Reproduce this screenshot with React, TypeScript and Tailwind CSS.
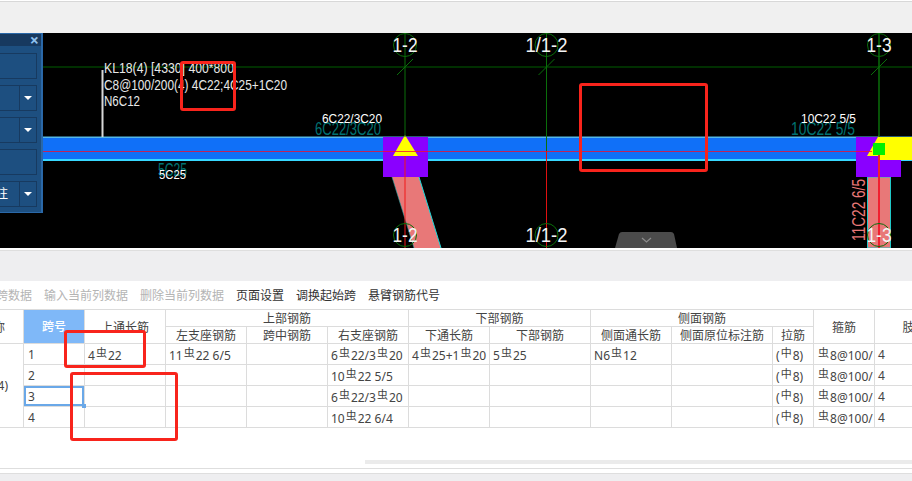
const HOLLOW = '虫'
const ROUND = '中'

// 钢筋符号: the real app uses a private font, a small raised glyph is the closest we get
function R({ c = HOLLOW }: { c?: string }) {
  return <span className="text-[11px] align-[3px] mx-[1px]">{c}</span>
}

function Rebar({ text }: { text: string }) {
  const parts = text.split(/(虫|中)/)
  return (
    <>
      {parts.map((p, i) =>
        p === HOLLOW || p === ROUND ? <R key={i} c={p} /> : <span key={i}>{p}</span>
      )}
    </>
  )
}

const rows = [
  { span: '1', top: '4虫22', left: '11虫22 6/5', right: '6虫22/3虫20', lowThrough: '4虫25+1虫20', low: '5虫25', side: 'N6虫12' },
  { span: '2', top: '', left: '', right: '10虫22 5/5', lowThrough: '', low: '', side: '' },
  { span: '3', top: '', left: '', right: '6虫22/3虫20', lowThrough: '', low: '', side: '' },
  { span: '4', top: '', left: '', right: '10虫22 6/4', lowThrough: '', low: '', side: '' }
]

const widths = [88, 61, 81, 81, 81, 81, 81, 101, 81, 101, 41, 61, 80]

const th = 'border border-[#dcdcdc] p-0 pt-[1px] font-normal text-center text-[#444] overflow-hidden whitespace-nowrap'
const td = 'border border-[#dcdcdc] p-0 pl-[3px] text-left text-[#444] overflow-hidden whitespace-nowrap'

function GridMark({ x, label, labelWidth }: { x: number; label: string; labelWidth: number }) {
  return (
    <g>
      <circle cx={x} cy={45} r={11.5} fill="none" stroke="#0a6e0a" />
      <circle cx={x} cy={235} r={11.5} fill="none" stroke="#0a6e0a" />
      <line x1={x - 8} y1={75} x2={x + 8} y2={59} stroke="#0a6e0a" />
      <text x={x - labelWidth / 2} y={52} fill="#f4f4f4" fontSize={20} textLength={labelWidth} lengthAdjust="spacingAndGlyphs">{label}</text>
      <text x={x - labelWidth / 2} y={242} fill="#f4f4f4" fontSize={20} textLength={labelWidth} lengthAdjust="spacingAndGlyphs">{label}</text>
    </g>
  )
}

function CadView() {
  return (
    <svg viewBox="0 33 912 215" className="block w-[912px] h-[215px] bg-black font-['Liberation_Sans',sans-serif]">
      <line x1={0} y1={67} x2={912} y2={67} stroke="#003f00" strokeWidth={1.5} />

      {/* 梁 */}
      <rect x={0} y={137} width={912} height={23} fill="#1070f8" />
      <rect x={0} y={136.5} width={912} height={1.5} fill="#55b8e8" />
      <rect x={0} y={159} width={912} height={2} fill="#38d8ff" />

      {/* 柱 */}
      <polygon points="392,177 419,177 441,248 414,248" fill="#e87878" />
      <line x1={419} y1={177} x2={441} y2={248} stroke="#20d8d8" />
      <line x1={392} y1={177} x2={414} y2={248} stroke="#20a8a8" strokeWidth={0.6} />
      <rect x={867.5} y={177} width={23} height={71} fill="#e87878" stroke="#20c8c8" />

      <rect x={383} y={137} width={45} height={40} fill="#8a00ff" />
      <rect x={856} y={137} width={45} height={40} fill="#8a00ff" />
      <polygon points="405,135 418,156 393,156" fill="#ffff00" />
      <polygon points="879,135 879,137 912,137 912,160 879,160 879,156 867,156" fill="#ffff00" />

      <line x1={0} y1={151.5} x2={872} y2={151.5} stroke="#f01030" strokeWidth={0.8} />

      <line x1={405} y1={33} x2={405} y2={137} stroke="#0a6e0a" />
      <line x1={405} y1={156} x2={405} y2={248} stroke="#f01818" />
      <line x1={546.5} y1={33} x2={546.5} y2={151} stroke="#0a6e0a" />
      <line x1={546.5} y1={151} x2={546.5} y2={248} stroke="#e01010" />
      <line x1={879} y1={33} x2={879} y2={137} stroke="#0a6e0a" strokeWidth={1.5} />
      <line x1={879} y1={155} x2={879} y2={248} stroke="#f02030" strokeWidth={2} />
      <rect x={873} y={143} width={12} height={12} fill="#00f000" />

      <GridMark x={405} label="1-2" labelWidth={25} />
      <GridMark x={546.5} label="1/1-2" labelWidth={42} />
      <GridMark x={879} label="1-3" labelWidth={25} />

      {/* 集中标注 */}
      <line x1={102.5} y1={70} x2={102.5} y2={137} stroke="#d8d8d8" strokeWidth={2} />
      <text x={104} y={73} fill="#e8e8e8" fontSize={14} textLength={130} lengthAdjust="spacingAndGlyphs">KL18(4) [4330] 400*800</text>
      <text x={104} y={90} fill="#e8e8e8" fontSize={14} textLength={183} lengthAdjust="spacingAndGlyphs">C8@100/200(4) 4C22;4C25+1C20</text>
      <text x={104} y={106} fill="#e8e8e8" fontSize={14} textLength={36} lengthAdjust="spacingAndGlyphs">N6C12</text>

      {/* 原位标注 */}
      <text x={158} y={176} fill="#007272" fontSize={19} textLength={29} lengthAdjust="spacingAndGlyphs">5C25</text>
      <text x={159} y={179} fill="#fff" fontSize={13} textLength={27} lengthAdjust="spacingAndGlyphs">5C25</text>
      <text x={315} y={135} fill="#007272" fontSize={19} textLength={66} lengthAdjust="spacingAndGlyphs">6C22/3C20</text>
      <text x={322} y={123} fill="#fff" fontSize={13} textLength={60} lengthAdjust="spacingAndGlyphs">6C22/3C20</text>
      <text x={791} y={135} fill="#007272" fontSize={19} textLength={64} lengthAdjust="spacingAndGlyphs">10C22 5/5</text>
      <text x={801} y={123} fill="#fff" fontSize={13} textLength={55} lengthAdjust="spacingAndGlyphs">10C22 5/5</text>
      <text transform="translate(865 241) rotate(-90)" fill="#e87878" fontSize={19} textLength={62} lengthAdjust="spacingAndGlyphs">11C22 6/5</text>

      <path d="M615 248 L619 234 Q620 232 622 232 L671 232 Q673 232 674 234 L677 248 Z" fill="#4b4b4b" />
      <path d="M642 238 L646.5 242 L651 238" fill="none" stroke="#8c8c8c" strokeWidth={1.2} />
    </svg>
  )
}

function PanelRow({ label, dropdown }: { label?: string; dropdown?: boolean }) {
  return (
    <div className="flex h-[26px] w-[37px] gap-0">
      <div className="flex-1 min-w-0 overflow-hidden border border-l-0 border-[#173a60] flex items-center justify-end pr-[11px] text-white text-[12px] whitespace-nowrap">
        {label}
      </div>
      {dropdown && (
        <div className="w-[17px] border border-l-0 border-[#173a60] flex items-center justify-center">
          <span className="w-0 h-0 border-x-[4px] border-x-transparent border-t-[4px] border-t-white" />
        </div>
      )}
    </div>
  )
}

function FloatingPanel() {
  return (
    <div className="absolute left-0 top-0 w-[43px] h-[180px] bg-[#1d4f80] border border-l-0 border-[#2a68a8] border-r-2">
      <div className="h-[12px] bg-[#17395f] flex justify-end items-center pr-[2px] text-[#8fc0ee] text-[16px] leading-none font-bold">×</div>
      <div className="flex flex-col gap-[6px] pt-[7px]">
        <PanelRow />
        <PanelRow dropdown />
        <PanelRow dropdown />
        <PanelRow />
        <PanelRow label="标注" dropdown />
      </div>
    </div>
  )
}

function RedBox({ className }: { className: string }) {
  return <div className={`absolute border-[3px] border-[#f8241c] rounded-[3px] ${className}`} />
}

export default function App() {
  return (
    <div className="relative w-[912px] h-[481px] overflow-hidden bg-white font-['Noto_Sans','Noto_Sans_CJK_SC',sans-serif] text-[12px]">
      <div className="h-[33px] mt-[1px] -mb-[1px] bg-[#f0f0f0] border-t border-[#d8d8d8]" />

      <div className="relative h-[215px]">
        <CadView />
        <FloatingPanel />
      </div>

      <div className="h-[3px] bg-white border-b border-[#dedede]" />
      <div className="h-[30px] bg-[#eeeef0]" />

      <div className="h-[28px] pt-[1px] flex items-center gap-3 -ml-[28px] text-[12px] whitespace-nowrap">
        <span className="text-[#b4b4b4]">复制跨数据</span>
        <span className="text-[#b4b4b4]">输入当前列数据</span>
        <span className="text-[#b4b4b4]">删除当前列数据</span>
        <span className="text-[#333]">页面设置</span>
        <span className="text-[#333]">调换起始跨</span>
        <span className="text-[#333]">悬臂钢筋代号</span>
      </div>

      <div className="h-[151px] overflow-hidden">
        <table className="table-fixed border-collapse -ml-[65px] w-[960px] leading-[15px]">
          <colgroup>
            {widths.map((w, i) => (
              <col key={i} style={{ width: w }} />
            ))}
          </colgroup>
          <thead>
            <tr className="h-[17px]">
              <th rowSpan={2} className={`${th} !text-right pr-[18px]`}>构件名称</th>
              <th rowSpan={2} className="border border-[#dcdcdc] p-0 font-medium text-center text-white bg-[#7fb8f8]">跨号</th>
              <th rowSpan={2} className={th}>上通长筋</th>
              <th colSpan={3} className={th}>上部钢筋</th>
              <th colSpan={2} className={th}>下部钢筋</th>
              <th colSpan={3} className={th}>侧面钢筋</th>
              <th rowSpan={2} className={th}>箍筋</th>
              <th rowSpan={2} className={th}>肢数</th>
            </tr>
            <tr className="h-[17px]">
              <th className={th}>左支座钢筋</th>
              <th className={th}>跨中钢筋</th>
              <th className={th}>右支座钢筋</th>
              <th className={th}>下通长筋</th>
              <th className={th}>下部钢筋</th>
              <th className={th}>侧面通长筋</th>
              <th className={th}>侧面原位标注筋</th>
              <th className={th}>拉筋</th>
            </tr>
          </thead>
          <tbody>
            {rows.map((r, i) => (
              <tr key={r.span} className="h-[21px]">
                {i === 0 && (
                  <td rowSpan={4} className={`${td} !text-right pr-[15px]`}>KL18(4)</td>
                )}
                <td className={`${td} relative pl-[4px] ${r.span === '3' ? '!overflow-visible' : ''}`}>
                  {r.span}
                  {r.span === '3' && (
                    <>
                      <div className="absolute inset-0 border-2 border-[#6aa8e8]" />
                      <div className="absolute right-[-2px] bottom-[-2px] w-[4px] h-[4px] bg-[#6aa8e8]" />
                    </>
                  )}
                </td>
                <td className={td}><Rebar text={r.top} /></td>
                <td className={td}><Rebar text={r.left} /></td>
                <td className={td} />
                <td className={td}><Rebar text={r.right} /></td>
                <td className={td}><Rebar text={r.lowThrough} /></td>
                <td className={td}><Rebar text={r.low} /></td>
                <td className={td}><Rebar text={r.side} /></td>
                <td className={td} />
                <td className={td}><Rebar text="(中8)" /></td>
                <td className={td}><Rebar text="虫8@100/" /></td>
                <td className={td}>4</td>
              </tr>
            ))}
          </tbody>
        </table>
      </div>

      <div className="h-[4px] ml-[365px] bg-[#ebebeb]" />
      <div className="h-[4px]" />
      <div className="h-[1px] bg-[#dedede]" />
      <div className="h-[4px] bg-white" />
      <div className="h-[1px] bg-[#dedede]" />
      <div className="h-[7px] bg-[#eeeef0]" />

      <RedBox className="left-[180px] top-[61px] w-[56px] h-[50px]" />
      <RedBox className="left-[579px] top-[83px] w-[129px] h-[89px]" />
      <RedBox className="left-[64px] top-[330px] w-[82px] h-[38px]" />
      <RedBox className="left-[70px] top-[372px] w-[108px] h-[69px]" />
    </div>
  )
}
